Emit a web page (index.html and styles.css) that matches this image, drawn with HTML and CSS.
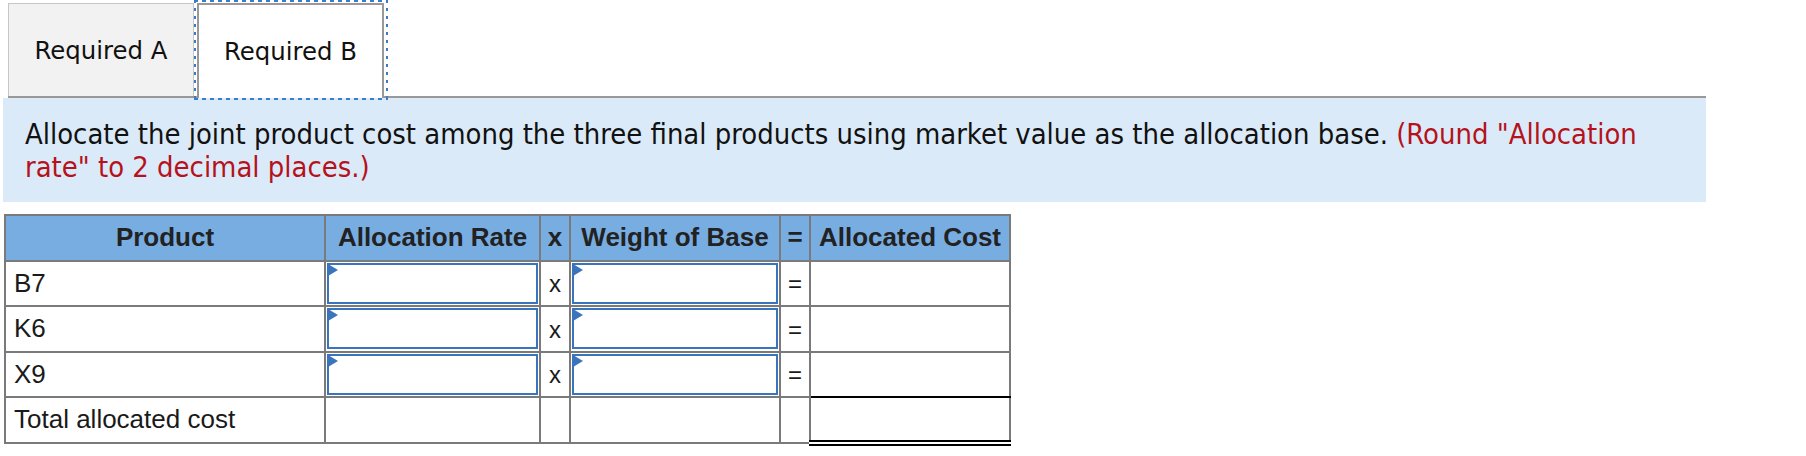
FILE: index.html
```html
<!DOCTYPE html>
<html>
<head>
<meta charset="utf-8">
<link rel="stylesheet" href="styles.css">
</head>
<body>
<div class="tabs">
  <div class="tab tab-a">Required A</div>
  <div class="tab tab-b">Required B</div>
</div>
<div class="instructions">
  Allocate the joint product cost among the three final products using market value as the allocation base. <span class="red">(Round "Allocation rate" to 2 decimal places.)</span>
</div>
<table class="grid">
  <thead>
    <tr>
      <th class="c-prod">Product</th>
      <th class="c-rate">Allocation Rate</th>
      <th class="c-op">x</th>
      <th class="c-weight">Weight of Base</th>
      <th class="c-op">=</th>
      <th class="c-cost">Allocated Cost</th>
    </tr>
  </thead>
  <tbody>
    <tr>
      <td class="label">B7</td>
      <td class="inp"><div class="box"><span class="flag"></span></div></td>
      <td class="op">x</td>
      <td class="inp"><div class="box"><span class="flag"></span></div></td>
      <td class="op">=</td>
      <td></td>
    </tr>
    <tr>
      <td class="label">K6</td>
      <td class="inp"><div class="box"><span class="flag"></span></div></td>
      <td class="op">x</td>
      <td class="inp"><div class="box"><span class="flag"></span></div></td>
      <td class="op">=</td>
      <td></td>
    </tr>
    <tr>
      <td class="label">X9</td>
      <td class="inp"><div class="box"><span class="flag"></span></div></td>
      <td class="op">x</td>
      <td class="inp"><div class="box"><span class="flag"></span></div></td>
      <td class="op">=</td>
      <td class="above-total"></td>
    </tr>
    <tr class="total">
      <td class="label">Total allocated cost</td>
      <td></td>
      <td></td>
      <td></td>
      <td></td>
      <td class="dbl"></td>
    </tr>
  </tbody>
</table>
</body>
</html>
```
FILE: styles.css
```css
html, body {
  margin: 0;
  padding: 0;
  background: #fff;
}
body {
  width: 1806px;
  height: 456px;
  overflow: hidden;
}
.tabs {
  display: flex;
  align-items: flex-start;
  margin-left: 8px;
  width: 1698px;
  padding-top: 3px;
  border-bottom: 2px solid #999;
  height: 93px;
  box-sizing: content-box;
}
.tab {
  display: flex;
  align-items: center;
  justify-content: center;
  box-sizing: border-box;
  font-family: "DejaVu Sans", Verdana, sans-serif;
  font-size: 24.4px;
  color: #111;
}
.tab-a {
  width: 186px;
  height: 93px;
  background: #f2f2f2;
  border: 1px solid #c6c6c6;
  border-bottom: none;
}
.tab-b {
  width: 187px;
  margin-left: 3px;
  height: 95px;
  background: #fff;
  border: 2px solid #999;
  border-bottom: none;
  position: relative;
  z-index: 1;
}
.tab-b::after {
  content: "";
  position: absolute;
  top: -5px;
  left: -5px;
  right: -6px;
  bottom: -2px;
  background:
    repeating-linear-gradient(90deg, #3b7cc6 0 4px, transparent 4px 8px) top left / 100% 2px no-repeat,
    repeating-linear-gradient(90deg, #3b7cc6 0 4px, transparent 4px 8px) bottom left / 100% 2px no-repeat,
    repeating-linear-gradient(180deg, #3b7cc6 0 3px, transparent 3px 8px) top left / 2px 100% no-repeat,
    repeating-linear-gradient(180deg, #3b7cc6 0 3px, transparent 3px 8px) top right / 2px 100% no-repeat;
  pointer-events: none;
}
.instructions {
  margin-left: 3px;
  width: 1703px;
  height: 104px;
  box-sizing: border-box;
  background: #dbeaf8;
  padding: 20px 22px 0 22px;
  font-family: "DejaVu Sans Condensed", "DejaVu Sans", sans-serif;
  font-stretch: condensed;
  font-size: 28.9px;
  line-height: 33px;
  color: #111;
}
.red {
  color: #b5121b;
}
.grid {
  margin-top: 12px;
  margin-left: 4px;
  border-collapse: collapse;
  font-family: "Liberation Sans", Arial, sans-serif;
  font-size: 26px;
  color: #1a1a1a;
}
.grid tr {
  height: 45.5px;
}
.grid th, .grid td {
  border: 2px solid #7a7a7a;
  padding: 0;
}
.grid th {
  background: #78ade2;
  font-weight: bold;
  color: #222;
  text-align: center;
  white-space: nowrap;
}
.c-prod { width: 318px; }
.c-rate { width: 213px; }
.c-op { width: 28px; }
.c-weight { width: 208px; }
.c-cost { width: 198px; }
.label {
  padding-left: 8px !important;
  text-align: left;
}
.op {
  text-align: center;
  font-size: 24px;
  padding-top: 2px !important;
}
.inp {
  padding: 1px !important;
}
.box {
  position: relative;
  height: 37px;
  border: 2px solid #3a74bd;
  background: #fff;
}
.flag {
  position: absolute;
  left: -1px;
  top: -1px;
  width: 0;
  height: 0;
  border-top: 6px solid transparent;
  border-bottom: 6px solid transparent;
  border-left: 10px solid #3a74bd;
}
.above-total {
  border-bottom-color: #000 !important;
}
.total .dbl {
  border-bottom: 6px double #000;
}
```
